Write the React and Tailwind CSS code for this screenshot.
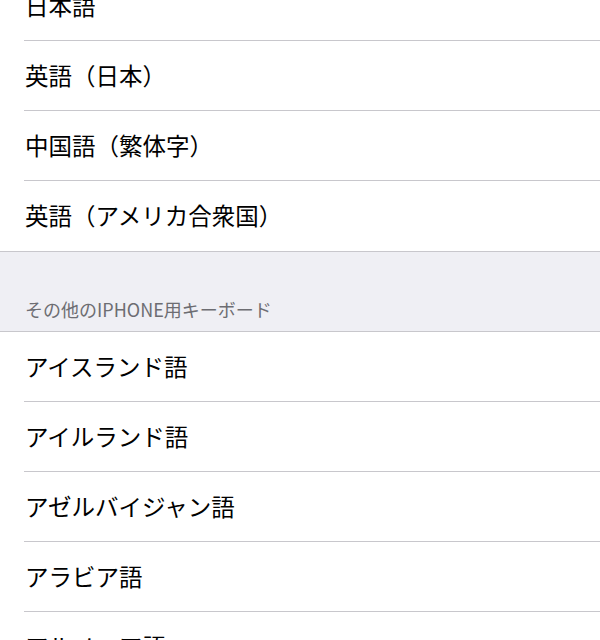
const topRows = ["日本語", "英語（日本）", "中国語（繁体字）", "英語（アメリカ合衆国）"];
const otherRows = ["アイスランド語", "アイルランド語", "アゼルバイジャン語", "アラビア語", "アルメニア語"];

const Row = ({ label, last }) => (
  <div className="pl-6 bg-white">
    <div
      className={
        "h-[70px] flex items-center pl-px " + (last ? "" : "border-b border-[#c8c7cc]")
      }
    >
      <span className="text-[23.5px] text-black leading-none [text-spacing-trim:space-all]">{label}</span>
    </div>
  </div>
);

const App = () => {
  return (
    <div
      className="w-[600px] h-[640px] overflow-hidden bg-white"
      style={{ fontFamily: '"Noto Sans CJK JP", "Noto Sans", sans-serif' }}
    >
      <div className="-mt-[29px]">
        {topRows.map((r, i) => (
          <Row key={r} label={r} last={i === topRows.length - 1} />
        ))}

        <div className="h-[81px] bg-[#efeff4] border-y border-[#c8c7cc] flex items-end pl-[25px] pb-[13px]">
          <span className="text-[18px] text-[#6d6d72] leading-none">その他のIPHONE用キーボード</span>
        </div>

        {otherRows.map((r) => (
          <Row key={r} label={r} />
        ))}
      </div>
    </div>
  );
};

export default App;
